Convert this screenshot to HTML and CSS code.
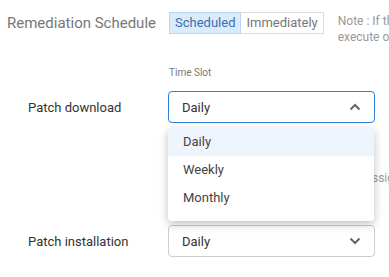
FILE: index.html
```html
<!doctype html>
<html lang="en">
<head>
  <meta charset="utf-8">
  <title>Remediation Schedule</title>
  <link rel="stylesheet" href="styles.css">
</head>
<body>
  <div class="head">
    <h2 class="title">Remediation Schedule</h2>
    <div class="toggle">
      <span class="tbtn on">Scheduled</span>
      <span class="tbtn">Immediately</span>
    </div>
    <p class="note">Note : If the scheduled time is missed, patches will<br>execute on the next available time slot</p>
  </div>

  <div class="form">
    <div class="slot-label">Time Slot</div>

    <div class="row">
      <label class="lbl">Patch download</label>
      <div class="field">
        <div class="select open">
          <span>Daily</span>
          <svg class="chev" width="12" height="8" viewBox="0 0 12 8"><path d="M1.5 6.5 L6 2 L10.5 6.5" fill="none" stroke="#666" stroke-width="2"/></svg>
        </div>
        <ul class="menu">
          <li class="sel">Daily</li>
          <li>Weekly</li>
          <li>Monthly</li>
        </ul>
      </div>
    </div>

    <p class="hint">The chosen patches will be sent and assigned</p>

    <div class="row second">
      <label class="lbl">Patch installation</label>
      <div class="field">
        <div class="select">
          <span>Daily</span>
          <svg class="chev" width="12" height="8" viewBox="0 0 12 8"><path d="M1.5 1.5 L6 6 L10.5 1.5" fill="none" stroke="#666" stroke-width="2"/></svg>
        </div>
      </div>
    </div>
  </div>
</body>
</html>
```

FILE: styles.css
```css
body { margin: 0; font-family: Roboto, "Liberation Sans", sans-serif; background: #fff; overflow: hidden; width: 389px; height: 277px; }
.head { display: flex; align-items: flex-start; padding: 12px 0 0 7px; height: 46px; white-space: nowrap; }
.title { margin: 1px 13px 0 0; font-size: 15px; font-weight: 400; color: #777; line-height: 20px; flex-shrink: 0; }
.toggle { display: flex; height: 22px; flex-shrink: 0; }
.tbtn { display: block; font-size: 13px; line-height: 20px; padding: 0 5px; border: 1px solid #ddd; color: #777; background: #fff; }
.tbtn.on { background: #dcebfb; border-color: #b9d6f2; color: #3a6fb0; }
.tbtn + .tbtn { border-left: 0; }
.note { margin: 1px 0 0 14px; font-size: 12px; color: #999; line-height: 16px; flex-shrink: 0; }
.form { padding-left: 28px; }
.slot-label { margin: 8px 0 0 141px; font-size: 10px; color: #777; line-height: 14px; }
.row { display: flex; align-items: center; margin-top: 11px; }
.row.second { margin-top: 39px; }
.lbl { width: 140px; font-size: 13px; color: #333; }
.field { position: relative; width: 207px; }
.select { display: flex; align-items: center; justify-content: space-between; height: 30px; padding: 0 13px; border: 1px solid #ccc; border-radius: 4px; font-size: 13px; color: #333; }
.select.open { border-color: #2f7fd8; }
.menu { position: absolute; left: 0; right: 1px; top: 37px; margin: 0; padding: 0 0 9px; list-style: none; background: #fff; border-radius: 4px; box-shadow: 0 3px 10px rgba(0,0,0,.25); z-index: 2; }
.menu li { height: 28px; line-height: 28px; padding-left: 15px; font-size: 13px; color: #444; }
.menu li.sel { background: #eef4fb; }
.hint { margin: 47px 0 0 141px; font-size: 12px; color: #999; white-space: nowrap; height: 16px; line-height: 16px; }
```
